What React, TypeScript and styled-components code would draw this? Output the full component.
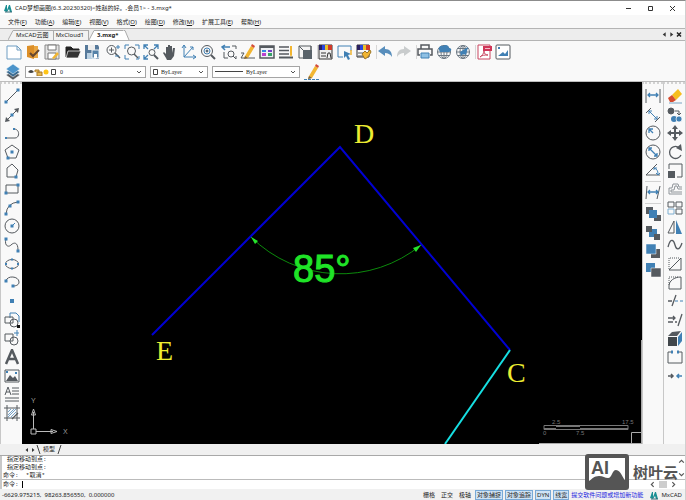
import React from "react";
import styled, { createGlobalStyle } from "styled-components";

const INK = "#555a5f";
const BLUE = "#4080b4";
const GOLD = "#f2b632";

const GlobalStyle = createGlobalStyle`
  * { box-sizing: border-box; }
  body { margin: 0; background: #f7f7f7; }
  button, select, input { font: inherit; color: inherit; border: 0; margin: 0; padding: 0; background: none; outline: 0; }
  ul { list-style: none; margin: 0; padding: 0; }
`;

const Window = styled.div`
  display: flex;
  flex-direction: column;
  min-height: 100vh;
  background: #f8f8f8;
  border-top: 1px solid #8c8c8c;
  border-right: 1px solid #d0d0d0;
  font-family: "Noto Sans", "Noto Sans CJK SC", sans-serif;
  font-size: 6px;
  line-height: 10px;
  color: #222;
`;

const TitleBar = styled.header`
  display: flex;
  align-items: center;
  gap: 2px;
  height: 14px;
  padding: 0 8px 0 4px;
  background: #fff;
`;

const Title = styled.h1`
  flex: 1;
  margin: 0;
  font-size: 6px;
  font-weight: 400;
  white-space: nowrap;
`;

const WindowButtons = styled.div`
  display: flex;
  gap: 13px;
`;

const TinyButton = styled.button<{ $size?: number }>`
  display: flex;
  width: ${(p) => p.$size ?? 9}px;
  height: ${(p) => p.$size ?? 9}px;
  svg { width: 100%; height: 100%; }
`;

const MenuBar = styled.nav`
  display: flex;
  align-items: center;
  gap: 8px;
  height: 13px;
  padding-left: 8px;
`;

const MenuButton = styled.button`
  white-space: nowrap;
`;

const TabBar = styled.div`
  display: flex;
  align-items: flex-end;
  height: 13px;
  padding: 0 3px 0 8px;
  background: #ededed;
  border-top: 1px solid #b4b4b4;
  border-bottom: 1px solid #b4b4b4;
`;

const Tab = styled.button<{ $active?: boolean }>`
  height: 10px;
  padding: 0 4px 0 2px;
  border-top: 1px solid #aaa;
  border-right: 1px solid ${(p) => (p.$active ? "transparent" : "#aaa")};
  background: ${(p) => (p.$active ? "#fff" : "#f2f2f2")};
  font-weight: ${(p) => (p.$active ? 700 : 400)};
  line-height: 9px;
  white-space: nowrap;
`;

const TabEdge = styled.svg`
  width: 6px;
  height: 10px;
  flex: none;
`;

const TabTools = styled.div`
  display: flex;
  align-items: center;
  height: 11px;
  margin-left: auto;
`;

const Toolbar = styled.div`
  display: flex;
  align-items: center;
  gap: 5px;
  height: 22px;
  padding-left: 6px;
  background: #f9f9f9;
`;

const ToolGroup = styled.div<{ $ruled?: boolean }>`
  display: flex;
  gap: 3px;
  box-shadow: ${(p) => (p.$ruled ? "-2px 0 0 -1px #d6d6d6" : "none")};
`;

const ToolButton = styled.button`
  display: block;
  flex: none;
  width: 16px;
  height: 16px;
`;

const Glyph = styled.svg`
  display: block;
  width: 16px;
  height: 16px;
  fill: none;
  stroke: ${INK};
`;

const PropertyBar = styled.div`
  display: flex;
  align-items: center;
  height: 19px;
  gap: 4px;
  padding: 0 5px;
  background: #f9f9f9;
  border-bottom: 1px solid #bdbdbd;
`;

const Combo = styled.label<{ $width: number }>`
  display: flex;
  align-items: center;
  width: ${(p) => p.$width}px;
  height: 12px;
  padding: 0 3px 0 2px;
  gap: 2px;
  background: #fff;
  border: 1px solid #a5a5a5;
  > svg { flex: none; }
`;

const ComboSelect = styled.select`
  appearance: none;
  flex: 1;
  min-width: 0;
  height: 10px;
  padding-left: 1px;
  font-family: "Liberation Serif", serif;
  line-height: 10px;
`;

const Workspace = styled.main`
  display: flex;
  flex: 1;
  min-height: 240px;
`;

const SideBar = styled.div<{ $width: number; $end: number }>`
  display: flex;
  flex-direction: column;
  justify-content: space-between;
  align-items: center;
  width: ${(p) => p.$width}px;
  flex: none;
  padding: 4px 0 ${(p) => p.$end}px;
  background: #f9f9f9;
  border-left: 1px solid #c8c8c8;
  border-top: 2px dotted #d2d2d2;
`;

const SideRule = styled.hr`
  width: 16px;
  margin: 0;
  border: 0;
  border-top: 1px solid #d2d2d2;
`;

const CanvasWrap = styled.div`
  flex: 1;
  min-width: 0;
  display: flex;
  background: #000;
`;

const Drawing = styled.svg`
  width: 100%;
  height: 100%;
  min-height: 0;
  fill: none;
`;

const ModelBar = styled.div`
  display: flex;
  align-items: center;
  height: 12px;
  padding-left: 24px;
  background: #f0f0f0;
  border-bottom: 1px solid #a8a8a8;
`;

const ModelTab = styled.button`
  padding: 0 2px;
  line-height: 9px;
`;

const CommandPanel = styled.section`
  position: relative;
  display: flex;
  flex-direction: column;
  background: #fff;
  border-left: 2px solid #c8c8c8;
  font-family: "Liberation Mono", "Noto Sans CJK SC", monospace;
  line-height: 8px;
`;

const History = styled.ul`
  height: 24px;
  border-bottom: 1px solid #bbb;
`;

const HistoryLine = styled.li<{ $indent?: boolean }>`
  padding-left: ${(p) => (p.$indent ? 5 : 1)}px;
  white-space: pre;
`;

const CommandRow = styled.div`
  display: flex;
  align-items: center;
  height: 9px;
  padding: 0 8px 0 1px;
  gap: 3px;
`;

const CommandField = styled.input`
  flex: 1;
  height: 7px;
  border-left: 1px solid #000;
`;

const ScrollButton = styled(TinyButton)`
  align-items: center;
`;

const ScrollThumb = styled.span`
  width: 8px;
  height: 7px;
  background: #cdcdcd;
`;

const HistoryScroll = styled.div`
  position: absolute;
  right: 0;
  top: 2px;
  display: flex;
  flex-direction: column;
  justify-content: space-between;
  height: 20px;
`;

const Watermark = styled.div`
  position: absolute;
  right: 7px;
  bottom: -1px;
  display: flex;
  align-items: center;
  gap: 4px;
  color: #555;
  font: 700 15px/18px "Noto Sans CJK SC", sans-serif;
  pointer-events: none;
`;

const WatermarkLogo = styled.svg`
  display: block;
  width: 44px;
  height: 36px;
`;

const StatusBar = styled.footer`
  display: flex;
  align-items: center;
  height: 12px;
  padding: 0 3px 0 2px;
  background: #f1f1f1;
`;

const Coordinates = styled.output`
  flex: 1;
  white-space: pre;
`;

const Modes = styled.div`
  display: flex;
  align-items: center;
  gap: 2px;
`;

const Mode = styled.button<{ $on?: boolean }>`
  height: 10px;
  padding: 0 1px;
  border: 1px solid ${(p) => (p.$on ? "#78a9d6" : "transparent")};
  background: ${(p) => (p.$on ? "#cfe3f5" : "transparent")};
  line-height: 8px;
  white-space: nowrap;
`;

const Feedback = styled.a`
  color: #2020e0;
  text-decoration: none;
  white-space: nowrap;
`;

const Brand = styled.span`
  display: flex;
  align-items: center;
  gap: 2px;
  margin-left: 7px;
`;

const dot = (x: number, y: number, r = 1.5) => (
  <rect key={`${x}-${y}`} x={x - r} y={y - r} width={r * 2} height={r * 2} fill={BLUE} stroke="none" />
);

const pencil = (
  <g stroke="none">
    <path d="M5 12 11 2l3 2-6 10-4 1z" fill={GOLD} />
    <path d="m11 2 1-2 3 2-1 2z" fill="#d34b37" />
    <path d="m5 12 3 2-4 1z" fill="#77634b" />
  </g>
);

const globe = (
  <g stroke="#6b7782">
    <circle cx="8" cy="8" r="6.5" />
    <ellipse cx="8" cy="8" rx="3" ry="6.5" />
    <path d="M8 1.500v13M1.500 8h13M2.500 4.500h11M2.500 11.500h11" />
  </g>
);

const spectrum = (
  <g stroke="none">
    <path d="M1 1h3v5H1z" fill="#292060" />
    <path d="M4 1h3v5H4z" fill="#2947df" />
    <path d="M7 1h3v5H7z" fill="#e8c229" />
    <path d="M10 1h4v5h-4z" fill="#cf3a2a" />
  </g>
);

const icons: Record<string, React.ReactNode> = {
  New: <path d="M1 2h10l4 4v9H1zM11 2v4h4" stroke="#6f9dc2" fill="#fff" />,
  Open: <><path d="M2 2 9 1v14l-7-2z" fill="#dc8f28" stroke="none" /><path d="M9 2h4v12H9z" fill="#e9a642" stroke="none" /><path d="m5 9 3 3 6-6" stroke="#66462d" strokeWidth="2" /></>,
  Save: <><path d="M1 1h14v14H1z" fill="#e3e3e3" stroke="#888" /><path d="M4 1h8v5H4zM4 9h8v6H4z" fill="#fff" stroke="#777" /><path d="m8 14 5-6 2 2-5 5z" fill={GOLD} stroke="none" /></>,
  Browse: <><path d="M1 13V3h5l2 2h6v3" stroke="#222" fill="#222" /><path d="M3 7h13l-3 7H1z" fill="#333" stroke="#fff" strokeWidth=".7" /></>,
  "Save as": <><path d="M1 1h13l1 2v12H1z" fill="#56799a" stroke="none" /><path d="M4 1h7v5H4z" fill="#eee" stroke="none" /><path d="M3 9h9v6H3z" fill="#b9d0e2" stroke="none" /><path d="M8 6h7v8H8z" fill="#5582a8" stroke="#e8eef3" /><path d="M10 10h3v4h-3z" fill="#fff" stroke="none" /></>,
  "Zoom realtime": <><circle cx="6.500" cy="6" r="4.500" /><path d="m10 9 5 5" strokeWidth="1.500" /><path d="M4 6h5M6.500 3.500v5" /><path d="M11 3h4M13 1v4M10 12h4" stroke={BLUE} /></>,
  "Zoom window": <><path d="M1 5V1h4M11 1h4v4M1 11v4h4M12 15h3v-3" stroke={BLUE} /><circle cx="7.500" cy="7" r="4" /><path d="m10 10 4 4" strokeWidth="1.500" /></>,
  "Zoom extents": <><path d="M1 5V1h4M1 1l4 4M11 1h4v4M15 1l-4 4M1 11v4h4M1 15l4-4" stroke={BLUE} strokeWidth="1.300" /><circle cx="9" cy="8.500" r="3" /><path d="m11 11 4 4" strokeWidth="2" /></>,
  Pan: <path d="M4 14 1 9l1-1 2 2V3h2v5-7h2v7-6h2v7l1-5h2l-1 8-3 4H5z" fill={INK} stroke="none" />,
  Coordinates: <path d="M3 1v12h12M3 13 12 3M1 4l2-3 2 3M12 11l3 2-3 2M9 3h3v3" stroke={BLUE} />,
  "Zoom center": <><circle cx="7" cy="7" r="5.500" /><circle cx="7" cy="7" r="3" stroke={BLUE} /><circle cx="7" cy="7" r="1" fill={BLUE} /><path d="m11 11 4 4" strokeWidth="2" /></>,
  "Zoom previous": <><path d="m4 1-3 2 3 3M1 3h8" stroke={BLUE} strokeWidth="1.500" /><path d="M11 2h4v3M3 8v6h4M15 12v3" /><circle cx="10" cy="10" r="3" /><path d="m12 12 3 3" /></>,
  Sketch: <><path d="M1 9h3l-3 5h14" />{pencil}</>,
  Properties: <><path d="M1 2h14v12H1z" fill="#eef0f4" strokeWidth="1.500" /><path d="M1 3h14" strokeWidth="2" /><g stroke="none"><path d="M3 6h4v2H3z" fill="#318be0" /><path d="M3 9h4v3H3z" fill="#ba40cf" /><path d="M9 6h4v2H9z" fill="#743dc8" /><path d="M9 9h4v3H9z" fill="#36a267" /></g></>,
  "Line list": <><path d="M1 3h10M1 6.500h10M1 10h10" strokeWidth="1.500" /><path d="M1 13.500h14" strokeWidth="2" /><path d="M12 2h2v9l-1 2-1-2z" fill={GOLD} stroke="none" /></>,
  Block: <><path d="M2 2h12v12H2z" fill="#f4f4f4" /><path d="M6 6h9v9H6z" fill="#59636a" stroke="none" /><path d="m2 2 4 4M14 2v4" /></>,
  Palette: <><path d="M1 1h13v14H1z" stroke="#333" fill="#eee" />{spectrum}<path d="M3 9h5M3 12h5m1 2 1-5h2l1 5" stroke="#333" /></>,
  Select: <><path d="M6 13H1V2h13v5" stroke={BLUE} /><path d="m7 7 7 3-3 1 2 4-2 1-2-4-2 2z" fill={BLUE} stroke="none" /><path d="M14 6v5" stroke={GOLD} strokeWidth="1.500" /></>,
  "Match colors": <><path d="M1 1h12v12H1z" stroke="#333" />{spectrum}<path d="M2 9h5M2 12h5" /><path d="m6 10 3-3 2 2 3-3 1 2-3 5-3 2z" fill={GOLD} stroke="#9b7628" /></>,
  Undo: <path d="m1 7 7-5v3c5 0 7 3 7 8-2-3-4-4-7-4v3z" fill="#588ebc" stroke="none" />,
  Redo: <path d="m15 7-7-5v3c-5 0-7 3-7 8 2-3 4-4 7-4v3z" fill="#c9cccd" stroke="none" />,
  Print: <><path d="M4 5V1h8v4M3 11H1V5h14v6h-2" strokeWidth="1.500" /><path d="M4 9h8v5H4z" fill="#8ec0e4" stroke={BLUE} /></>,
  "Publish cloud": <>{globe}<path d="M3 6c-1-3 2-5 4-4 2-2 6-1 6 2 3 0 3 3 0 4H4z" fill={BLUE} stroke="none" /></>,
  "Share link": <>{globe}<path d="m5 8 8-5-2 8-3-1-2 2z" fill={BLUE} stroke="none" /></>,
  "Export PDF": <><path d="M2 1h12v14H2z" fill="#fff" stroke="#c94761" /><path d="M7 2h9v5H7z" fill="#cf3557" stroke="none" /><path d="M9 4.500h5" stroke="#f4b8c4" /><path d="M4 13c2-1 4-4 4-6 0 3 2 4 4 4-3 0-6 0-8 2z" stroke="#c94761" /></>,
  "Export image": <><rect x="1" y="1" width="14" height="14" rx="1" fill="#fff" /><path d="m3 12 5-4 2 2 3-4v6z" fill={BLUE} stroke="none" />{dot(4, 4, 1)}</>,
  Layers: <><path d="m8 7 7 4-7 5-7-5z" fill={INK} stroke="#fff" strokeWidth=".5" /><path d="m8 4 7 4-7 5-7-5z" fill="#38698f" stroke="#fff" strokeWidth=".5" /><path d="m8 0 7 5-7 5-7-5z" fill="#4c94ca" stroke="#fff" strokeWidth=".5" /></>,
  Linetype: <>{pencil}<path d="M0 15.500h16" stroke={BLUE} strokeDasharray="3 1" /></>,
  Line: <><path d="M2 14 14 2" />{dot(2, 14)}{dot(14, 2)}</>,
  "Construction line": <><path d="M3 13 13 3" /><path d="m1 15 1-5 4 4zM15 1l-1 5-4-4z" fill={INK} stroke="none" />{dot(8, 8)}</>,
  Polyline: <><path d="M2 13h9c5 0 5-9-1-9" />{dot(2, 13, 1)}{dot(10, 4, 1)}</>,
  Polygon: <><path d="m8 1 7 5-3 8H4L1 6z" />{dot(8, 8)}{dot(4, 14)}</>,
  Shape: <><path d="m8 1 6 6-2 7H3V5z" />{dot(12, 14)}</>,
  Rectangle: <><path d="M2 4h12v8H2z" />{dot(2, 12)}{dot(14, 4)}</>,
  Arc: <><path d="M2 14Q3 3 14 2" />{dot(2, 14)}{dot(6, 6)}{dot(14, 2)}</>,
  Circle: <><circle cx="8" cy="8" r="7" /><path d="m8 8 3-3" stroke={BLUE} />{dot(8, 8)}</>,
  Spline: <><path d="M2 2c-2 6 2 9 5 6s7-3 7 5" />{dot(2, 2)}{dot(14, 14)}</>,
  Ellipse: <><ellipse cx="8" cy="8" rx="6.500" ry="4.500" />{dot(2, 8, 1)}{dot(14, 8, 1)}{dot(8, 3.5, 1)}{dot(8, 12.5, 1)}</>,
  "Ellipse arc": <><path d="M2 7c1-6 13-5 13 1 0 3-3 4-6 4" />{dot(2, 7)}{dot(9, 12)}</>,
  Point: dot(8, 8, 2),
  "Insert block": <><path d="M6 6V1h6l3 3v6" stroke={BLUE} /><path d="M1 5h8v6H1z" /><circle cx="10" cy="11" r="4" /><path d="M13 13h3v3h-3z" fill="#111" stroke="none" /></>,
  "Make block": <><path d="M1 4h8v7H1z" /><circle cx="10" cy="11" r="4" /><path d="M10 3h5M13 0v6" stroke={BLUE} /></>,
  Text: <path d="m2 15 6-14 6 14M4 10h8" strokeWidth="2.500" />,
  Image: <><path d="M1 2h14v12H1z" /><path d="m2 13 4-6 3 3 2-2 3 5z" fill={INK} stroke="none" />{dot(3, 4, 1)}{dot(12, 5, 1)}</>,
  "Multiline text": <path d="m1 9 3-8 3 8M2 6h4M8 2h7M8 5h7M8 8h7M1 12h14M1 15h14" />,
  Hatch: <><path d="M3 0v16M13 0v16M0 3h16M0 13h16" /><path d="m4 7 3-3M4 10l6-6M4 12l8-8M7 12l5-5" stroke={BLUE} strokeWidth=".7" /><path d="m8 14 6-6" strokeWidth="1.300" /></>,
  "Linear dimension": <><path d="M1 1v14M15 1v14" /><path d="M3 7h10M5 5 3 7l2 2M11 5l2 2-2 2" stroke={BLUE} strokeWidth="1.300" /></>,
  "Aligned dimension": <><path d="m1 6 5-5M10 15l5-5" /><path d="m4 4 8 8M4 7V4h3M12 9v3H9" stroke={BLUE} /></>,
  "Radius dimension": <><circle cx="8" cy="8" r="7" /><path d="M8 8 4 4m0 4V4h4" stroke={BLUE} strokeWidth="1.300" /></>,
  "Diameter dimension": <><circle cx="8" cy="8" r="7" /><path d="m4 4 8 8M4 7V4h3M12 9v3H9" stroke={BLUE} strokeWidth="1.300" /></>,
  "Angular dimension": <><path d="M12 2 1 13h14" /><path d="M9 6c3 1 4 3 4 6M9 8V6h3M11 11l2 2 2-2" stroke={BLUE} /></>,
  "Oblique dimension": <><path d="M2 2 1 15M15 2l-3 13" /><path d="M3 8h10M5 6 3 8l2 2M11 6l2 2-2 2" stroke={BLUE} strokeWidth="1.300" /></>,
  "Bring forward": <g stroke="none"><path d="M1 1h7v7H1zM9 9h7v6H9z" fill={INK} /><path d="M4 4h8v8H4z" fill={BLUE} /></g>,
  "Send backward": <g stroke="none"><path d="M4 4h8v8H4z" fill={BLUE} /><path d="M1 1h6v6H1zM9 9h6v6H9z" fill={INK} /></g>,
  "Bring to front": <g stroke="none"><path d="M6 6h9v9H6z" fill={INK} /><path d="M1 1h10v10H1z" fill={BLUE} stroke="#fff" strokeWidth=".5" /></g>,
  "Send to back": <g stroke="none"><path d="M1 1h9v9H1z" fill={BLUE} /><path d="M6 6h10v9H6z" fill={INK} stroke="#fff" strokeWidth=".5" /></g>,
  Erase: <><path d="m5 7 6-6 4 5-6 6z" fill="#f6be1e" stroke="none" /><path d="m5 7 4 5-3 2H3L1 10z" fill="#d64c2f" stroke="none" /><path d="M2 15h13" stroke="#78a4c3" /></>,
  Copy: <><circle cx="4" cy="4" r="3" fill={INK} /><circle cx="7" cy="12" r="3" fill={BLUE} stroke="none" /><circle cx="12" cy="12" r="3" fill={BLUE} stroke="#fff" strokeWidth=".7" /><path d="M8 4h4v4m-2-2 2 2 2-2" /></>,
  Move: <><path d="M8 3v10M3 8h10" strokeWidth="2" /><path d="m8 0 3 4H5zM8 16l3-4H5zM0 8l4-3v6zM16 8l-4-3v6z" fill={INK} stroke="none" /></>,
  Rotate: <><path d="M11 3a6 6 0 1 0 3 8" strokeWidth="1.300" /><path d="m9 4 5-4 1 7z" fill={INK} stroke="none" /></>,
  Scale: <><path d="M2 6V1h13v13h-5" /><path d="M1 8h7v7H1z" fill={INK} stroke="none" /></>,
  Offset: <path d="M15 13H2V7h3l1-4h5l1 3h3M15 11H4V9h3l1-4h2l1 3h4" stroke="#8e9499" />,
  Array: <><path d="M1 2h6v5H1zM9 2h6v5H9zM9 9h6v5H9z" /><path d="M1 9h6v5H1z" stroke="#7caed0" /></>,
  Mirror: <><path d="M7 2v12H1z" /><path d="M9 1v14h6z" fill={BLUE} stroke="none" /></>,
  "Edit spline": <path d="M1 10C4-1 7 4 8 8s4 7 7-2" strokeWidth="1.300" />,
  Chamfer: <><path d="M2 14 14 2v12H2" /><path d="M2 13V2h11" strokeDasharray="1 1" /></>,
  Fillet: <><path d="M2 14V11C2 6 7 2 14 2v12H2" /><path d="M2 10V2h9" strokeDasharray="1 1" /></>,
  Trim: <><path d="M1 8h4m0 5 4-11" strokeWidth="1.300" /><path d="M8 8h8" stroke={BLUE} strokeDasharray="3 2" /></>,
  Extend: <path d="M1 6h7M6 4l2 2-2 2M1 10h5m2 0h2m1 4 4-12" strokeWidth="1.300" />,
  Explode: <><path d="M1 6h9v9H1z" fill="#41474b" stroke="none" /><path d="m5 1 9-1-4 5H1z" fill={INK} stroke="none" /><path d="m11 6 4-5v9l-4 5z" fill={BLUE} stroke="none" /></>,
  Break: <><path d="M4 3H1v11h14V3h-3" /><path d="M4 3h2M10 3h2" stroke={BLUE} strokeWidth="3" /></>,
  Join: <><path d="M1 8h5M4 6l2 2-2 2" strokeWidth="1.500" /><path d="M15 8h-5m2-2-2 2 2 2" stroke={BLUE} strokeWidth="1.500" /></>,
};

const toolbarGroups: { ruled?: boolean; tools: string[] }[] = [
  { tools: ["New", "Open", "Save"] },
  { tools: ["Browse", "Save as"] },
  { tools: ["Zoom realtime", "Zoom window", "Zoom extents", "Pan", "Coordinates", "Zoom center"] },
  { tools: ["Zoom previous", "Sketch", "Properties", "Line list", "Block"] },
  { ruled: true, tools: ["Palette", "Select", "Match colors"] },
  { ruled: true, tools: ["Undo", "Redo"] },
  { ruled: true, tools: ["Print", "Publish cloud", "Share link"] },
  { ruled: true, tools: ["Export PDF", "Export image"] },
];

const drawTools = ["Line", "Construction line", "Polyline", "Polygon", "Shape", "Rectangle", "Arc", "Circle", "Spline", "Ellipse", "Ellipse arc", "Point", "Insert block", "Make block", "Text", "Image", "Multiline text", "Hatch"];
const dimensionTools = ["Linear dimension", "Aligned dimension", "Radius dimension", "Diameter dimension", "Angular dimension", "", "Oblique dimension", "", "Bring forward", "Send backward", "Bring to front", "Send to back"];
const modifyTools = ["Erase", "Copy", "Move", "Rotate", "Scale", "Offset", "Array", "Mirror", "Edit spline", "Chamfer", "Fillet", "Trim", "Extend", "Explode", "Break", "Join"];
const menus = [["文件", "F"], ["功能", "A"], ["编辑", "E"], ["视图", "V"], ["格式", "O"], ["绘图", "D"], ["修改", "M"], ["扩展工具", "E"], ["帮助", "H"]];

function Tool({ name }: { name: string }) {
  return (
    <ToolButton aria-label={name}>
      <Glyph viewBox="0 0 16 16" aria-hidden="true">{icons[name]}</Glyph>
    </ToolButton>
  );
}

function Side({ tools, width, end }: { tools: string[]; width: number; end: number }) {
  return (
    <SideBar $width={width} $end={end}>
      {tools.map((t, i) => (t ? <Tool key={t} name={t} /> : <SideRule key={i} />))}
    </SideBar>
  );
}

const Chevron = ({ turn = 0 }: { turn?: number }) => (
  <svg width="6" height="6" viewBox="0 0 6 6" fill="none" stroke="#555" aria-hidden="true">
    <path d="m1 2 2 2 2-2" transform={`rotate(${turn} 3 3)`} />
  </svg>
);

const Triangle = ({ left }: { left?: boolean }) => (
  <svg width="6" height="6" viewBox="0 0 6 6" fill="#333" aria-hidden="true">
    <path d={left ? "M4 1v4L1.500 3z" : "M2 1v4l2.500-2z"} />
  </svg>
);

const AppLogo = () => (
  <svg width="9" height="9" viewBox="0 0 9 9" aria-hidden="true">
    <path d="M0 7 2 1h1v5l2-5h1l2 7H6L5 5 3 8z" fill="#1b8f93" />
    <path d="M1 8h7" stroke="#3b6c78" />
  </svg>
);

function Canvas() {
  return (
    <Drawing viewBox="0 0 620 362" preserveAspectRatio="xMinYMin slice" role="img" aria-label="85°">
      <path d="M130 253 318 65 488 268" stroke="#0000d2" strokeWidth="2" />
      <path d="m488 268-65 94" stroke="#16dfe2" strokeWidth="2" />
      <path d="M229 155A127 127 0 0 0 399 163" stroke="#0c8a0c" />
      <path d="m229 155 7 4-3 3zM399 163l-8 3 3 4z" fill="#25e32b" />
      <g fill="#ecec32" fontFamily="Liberation Serif, serif" fontSize="28">
        <text x="332" y="61">D</text>
        <text x="134" y="278">E</text>
        <text x="485" y="300">C</text>
      </g>
      <text x="271" y="200" fill="#1fe327" stroke="#1fe327" fontFamily="Liberation Sans, sans-serif" fontSize="38">85°</text>
      <g stroke="#bbb" fill="none">
        <path d="M9 347h5v5H9zM11.500 347v-17M14 349.500h17" />
        <path d="m9.500 333 2-6 2 6zM29 347.500l6 2-6 2z" />
      </g>
      <g fill="#999" fontFamily="Liberation Sans, sans-serif" fontSize="7">
        <text x="9" y="321">Y</text>
        <text x="41" y="352">X</text>
      </g>
      <g fill="#777" fontFamily="Liberation Sans, sans-serif" fontSize="6">
        <text x="530" y="342">2.5</text>
        <text x="600" y="342">17.5</text>
        <text x="521" y="353">0</text>
        <text x="554" y="353">7.5</text>
      </g>
      <path d="M522 343.500h84v4h-84zM522 346.500h12M534 344.500h24M558 346.500h48" stroke="#777" />
      <path d="M609.500 361v-10.500H620M517 361.500h103M619.500 258v104" stroke="#aaa" />
    </Drawing>
  );
}

export default function App() {
  return (
    <>
      <GlobalStyle />
      <Window>
        <TitleBar>
          <AppLogo />
          <Title>{"CAD梦想画图(6.3.20230320)<姓赵的好。,会员1> - 3.mxg*"}</Title>
          <WindowButtons>
            <TinyButton aria-label="Minimize"><svg viewBox="0 0 9 9" stroke="#333"><path d="M2 4.500h5" /></svg></TinyButton>
            <TinyButton aria-label="Maximize"><svg viewBox="0 0 9 9" stroke="#333" fill="none"><path d="M2.500 2.500h4v4h-4z" /></svg></TinyButton>
            <TinyButton aria-label="Close"><svg viewBox="0 0 9 9" stroke="#333"><path d="m2 2 5 5M7 2 2 7" /></svg></TinyButton>
          </WindowButtons>
        </TitleBar>
        <MenuBar>
          {menus.map(([name, key]) => (
            <MenuButton key={name}>{name}(<u>{key}</u>)</MenuButton>
          ))}
        </MenuBar>
        <TabBar>
          <TabEdge viewBox="0 0 6 10"><path d="M0 10 5 .5h1V10z" fill="#f2f2f2" /><path d="M0 10 5 .5h1" stroke="#aaa" fill="none" /></TabEdge>
          <Tab>MxCAD云图</Tab>
          <Tab>MxCloud1</Tab>
          <TabEdge viewBox="0 0 6 10"><path d="M0 10 5 .5h1V10z" fill="#fff" /><path d="M0 10 5 .5h1" stroke="#aaa" fill="none" /></TabEdge>
          <Tab $active>3.mxg*</Tab>
          <TabEdge viewBox="0 0 6 10"><path d="M0 0h1l4 10H0z" fill="#fff" /><path d="M0 .5h1L5 10" stroke="#aaa" fill="none" /></TabEdge>
          <TabTools>
            <TinyButton $size={7} aria-label="Previous tab"><Triangle left /></TinyButton>
            <TinyButton $size={7} aria-label="Next tab"><Triangle /></TinyButton>
            <TinyButton $size={7} aria-label="Close tab"><svg viewBox="0 0 7 7" stroke="#222" strokeWidth="1.500"><path d="m2 1.500 4 4m0-4-4 4" /></svg></TinyButton>
          </TabTools>
        </TabBar>
        <Toolbar>
          {toolbarGroups.map((g) => (
            <ToolGroup key={g.tools[0]} $ruled={g.ruled}>
              {g.tools.map((t) => <Tool key={t} name={t} />)}
            </ToolGroup>
          ))}
        </Toolbar>
        <PropertyBar>
          <Tool name="Layers" />
          <Combo $width={121}>
            <svg width="29" height="8" viewBox="0 0 29 8" fill="none" aria-hidden="true">
              <path d="M0 4q3-4 6 0-3 2-6 0z" fill="#444" />
              <path d="M7 4V2h4v3M9 4h5v4H9z" stroke="#a9782b" fill="#e5b850" />
              <circle cx="18" cy="4" r="2.500" fill="#ffc516" />
              <path d="M23.500 1.500h4v5h-4z" stroke="#444" />
            </svg>
            <ComboSelect aria-label="Layer"><option>0</option></ComboSelect>
            <Chevron />
          </Combo>
          <Combo $width={58}>
            <svg width="5" height="6" viewBox="0 0 5 6" fill="none" stroke="#444" aria-hidden="true"><path d="M.5.500h4v5h-4z" /></svg>
            <ComboSelect aria-label="Color"><option>ByLayer</option></ComboSelect>
            <Chevron />
          </Combo>
          <Combo $width={88}>
            <svg width="28" height="4" viewBox="0 0 28 4" stroke="#444" aria-hidden="true"><path d="M0 1.500h28" /></svg>
            <ComboSelect aria-label="Linetype"><option>ByLayer</option></ComboSelect>
            <Chevron />
          </Combo>
          <Tool name="Linetype" />
        </PropertyBar>
        <Workspace>
          <Side tools={drawTools} width={22} end={23} />
          <CanvasWrap><Canvas /></CanvasWrap>
          <Side tools={dimensionTools} width={21} end={166} />
          <Side tools={modifyTools} width={22} end={60} />
        </Workspace>
        <ModelBar>
          <TinyButton $size={6} aria-label="Previous layout"><Triangle left /></TinyButton>
          <TinyButton $size={6} aria-label="Next layout"><Triangle /></TinyButton>
          <svg width="5" height="9" viewBox="0 0 5 9" stroke="#444" aria-hidden="true"><path d="m1 0 3 9" /></svg>
          <ModelTab>模型</ModelTab>
          <svg width="5" height="9" viewBox="0 0 5 9" stroke="#444" aria-hidden="true"><path d="M4 0 1 9" /></svg>
        </ModelBar>
        <CommandPanel>
          <History>
            <HistoryLine $indent>指定移动到点:</HistoryLine>
            <HistoryLine $indent>指定移动到点:</HistoryLine>
            <HistoryLine>{"命令:  *取消*"}</HistoryLine>
          </History>
          <CommandRow>
            <label htmlFor="command">命令:</label>
            <CommandField id="command" />
            <ScrollButton $size={7} aria-label="Scroll left"><Chevron turn={90} /></ScrollButton>
            <ScrollThumb />
            <ScrollButton $size={7} aria-label="Scroll right"><Chevron turn={270} /></ScrollButton>
          </CommandRow>
          <HistoryScroll>
            <TinyButton $size={7} aria-label="Scroll up"><Chevron turn={180} /></TinyButton>
            <TinyButton $size={7} aria-label="Scroll down"><Chevron /></TinyButton>
          </HistoryScroll>
          <Watermark>
            <WatermarkLogo viewBox="0 0 44 36" aria-hidden="true">
              <rect width="44" height="36" rx="3" fill="#555" />
              <path d="M4 4h36v22c-2-1-4-10-9-10-4 0-4 8-8 8-3 0-5-2-9-2-5 0-7 3-10 5z" fill="#fff" />
              <text x="6" y="20" fill="#555" fontFamily="Liberation Sans, sans-serif" fontWeight="700" fontSize="18">AI</text>
            </WatermarkLogo>
            树叶云
          </Watermark>
        </CommandPanel>
        <StatusBar>
          <Coordinates>{"-6629.975215,  98263.856550,  0.000000"}</Coordinates>
          <Modes>
            <Mode>栅格</Mode>
            <Mode>正交</Mode>
            <Mode>极轴</Mode>
            <Mode $on>对象捕捉</Mode>
            <Mode $on>对象追踪</Mode>
            <Mode $on>DYN</Mode>
            <Mode $on>线宽</Mode>
            <Feedback href="#feedback">提交软件问题或增加新功能</Feedback>
          </Modes>
          <Brand><AppLogo />MxCAD</Brand>
        </StatusBar>
      </Window>
    </>
  );
}
